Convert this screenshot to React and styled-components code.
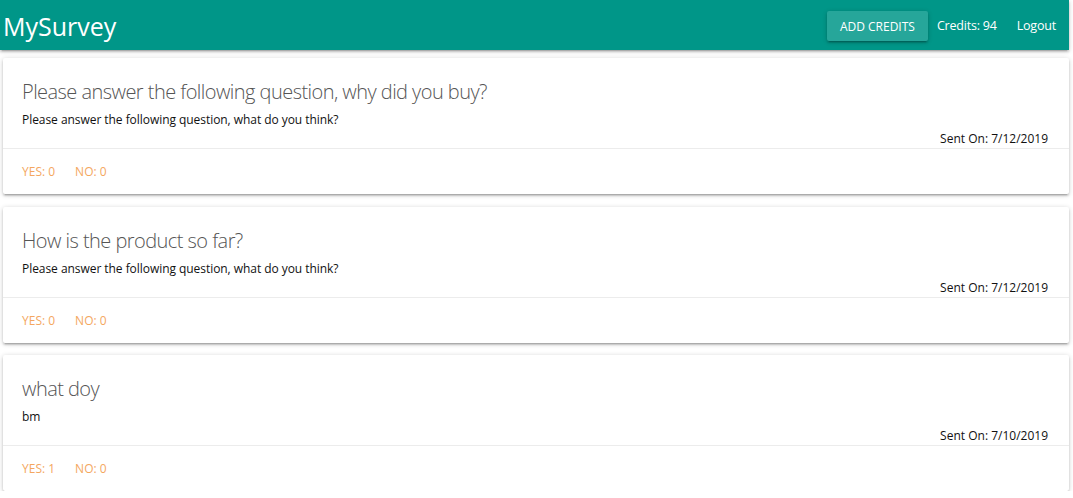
import React from 'react';
import styled, { createGlobalStyle } from 'styled-components';

const GlobalStyle = createGlobalStyle`
  html, body {
    margin: 0;
    padding: 0;
    background: #fff;
  }
  body {
    font-family: "Open Sans", "Noto Sans", sans-serif;
    color: rgba(0, 0, 0, 0.87);
  }
  * {
    box-sizing: border-box;
  }
`;

const surveys = [
  {
    title: 'Please answer the following question, why did you buy?',
    body: 'Please answer the following question, what do you think?',
    sent: '7/12/2019',
    yes: 0,
    no: 0,
  },
  {
    title: 'How is the product so far?',
    body: 'Please answer the following question, what do you think?',
    sent: '7/12/2019',
    yes: 0,
    no: 0,
  },
  {
    title: 'what doy',
    body: 'bm',
    sent: '7/10/2019',
    yes: 1,
    no: 0,
  },
];

function App() {
  return (
    <Page>
      <GlobalStyle />
      <Nav>
        <Brand>MySurvey</Brand>
        <NavLinks>
          <CreditsButton>Add Credits</CreditsButton>
          <NavItem>Credits: 94</NavItem>
          <NavItem>Logout</NavItem>
        </NavLinks>
      </Nav>
      <List>
        {surveys.map((s, i) => (
          <Card key={i}>
            <CardContent>
              <CardTitle>{s.title}</CardTitle>
              <Body>{s.body}</Body>
              <SentOn>Sent On: {s.sent}</SentOn>
            </CardContent>
            <CardAction>
              <span>Yes: {s.yes}</span>
              <span>No: {s.no}</span>
            </CardAction>
          </Card>
        ))}
      </List>
    </Page>
  );
}

export default App;

const Page = styled.div`
  width: 1069px;
`;

const Nav = styled.nav`
  height: 50px;
  background: #009688;
  color: #fff;
  display: flex;
  align-items: center;
  justify-content: space-between;
  padding: 0 13px 0 3px;
  box-shadow: 0 2px 2px 0 rgba(0, 0, 0, 0.14), 0 3px 1px -2px rgba(0, 0, 0, 0.12),
    0 1px 5px 0 rgba(0, 0, 0, 0.2);
  position: relative;
  z-index: 1;
`;

const Brand = styled.div`
  font-size: 25px;
  line-height: 50px;
  margin-top: 2px;
`;

const NavLinks = styled.div`
  display: flex;
  align-items: center;
  gap: 20px;
`;

const CreditsButton = styled.button`
  width: 101px;
  height: 30px;
  padding: 0;
  margin-right: -11px;
  margin-top: 2px;
  border: none;
  border-radius: 2px;
  background: #26a69a;
  color: #fff;
  font-family: inherit;
  font-size: 12px;
  text-transform: uppercase;
  box-shadow: 0 2px 2px 0 rgba(0, 0, 0, 0.14), 0 3px 1px -2px rgba(0, 0, 0, 0.12),
    0 1px 5px 0 rgba(0, 0, 0, 0.2);
`;

const NavItem = styled.span`
  font-size: 12.5px;
  letter-spacing: -0.2px;
`;

const List = styled.div`
  display: flex;
  flex-direction: column;
  gap: 12.5px;
  padding: 8px 0 0 3px;
`;

const Card = styled.div`
  background: #fff;
  border-radius: 2px;
  height: 136px;
  display: flex;
  flex-direction: column;
  box-shadow: 0 2px 2px 0 rgba(0, 0, 0, 0.14), 0 3px 1px -2px rgba(0, 0, 0, 0.12),
    0 1px 5px 0 rgba(0, 0, 0, 0.2);
`;

const CardContent = styled.div`
  display: flex;
  flex-direction: column;
  padding: 20px 21px 0 19px;
  height: 90px;
`;

const CardTitle = styled.div`
  font-size: 20px;
  font-weight: 300;
  letter-spacing: -0.55px;
  color: #555;
  line-height: 28px;
  margin-bottom: 5px;
`;

const Body = styled.div`
  font-size: 12px;
  letter-spacing: -0.05px;
  color: #111;
  line-height: 18px;
`;

const SentOn = styled.div`
  font-size: 12px;
  color: #111;
  text-align: right;
  line-height: 18px;
  margin-top: 1px;
`;

const CardAction = styled.div`
  flex: 1;
  border-top: 1px solid rgba(160, 160, 160, 0.2);
  display: flex;
  align-items: center;
  gap: 20px;
  padding: 0 19px;
  font-size: 12px;
  color: #f4a75f;
  text-transform: uppercase;
`;
